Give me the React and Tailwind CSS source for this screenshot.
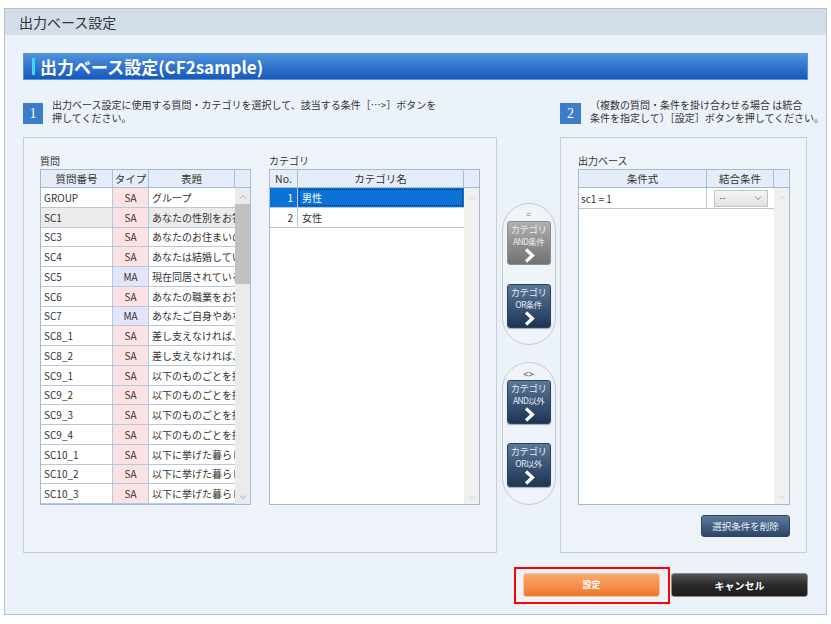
import React from 'react';

const questions = [
  ['GROUP', 'SA', 'グループ'],
  ['SC1', 'SA', 'あなたの性別をお答えください。'],
  ['SC3', 'SA', 'あなたのお住まいの地域をお答えください。'],
  ['SC4', 'SA', 'あなたは結婚していますか。'],
  ['SC5', 'MA', '現在同居されている方をお答えください。'],
  ['SC6', 'SA', 'あなたの職業をお答えください。'],
  ['SC7', 'MA', 'あなたご自身やあなたのご家族の職業'],
  ['SC8_1', 'SA', '差し支えなければ、あなたの'],
  ['SC8_2', 'SA', '差し支えなければ、世帯の'],
  ['SC9_1', 'SA', '以下のものごとを持っていますか。'],
  ['SC9_2', 'SA', '以下のものごとを持っていますか。'],
  ['SC9_3', 'SA', '以下のものごとを持っていますか。'],
  ['SC9_4', 'SA', '以下のものごとを持っていますか。'],
  ['SC10_1', 'SA', '以下に挙げた暮らしの'],
  ['SC10_2', 'SA', '以下に挙げた暮らしの'],
  ['SC10_3', 'SA', '以下に挙げた暮らしの'],
  ['SC10_4', 'SA', '以下に挙げた暮らしの'],
];

// small chevrons for the scroll tracks
function Arrow({ up, color = '#a6a6a6' }) {
  return (
    <svg width="8" height="5" viewBox="0 0 8 5" className="block">
      <path d={up ? 'M1 4.5 L4 1.5 L7 4.5' : 'M1 0.5 L4 3.5 L7 0.5'} fill="none" stroke={color} strokeWidth="1" />
    </svg>
  );
}

function Chevron() {
  return (
    <svg width="12" height="15" viewBox="0 0 12 15" className="block">
      <path d="M3 1.5 L9.5 7.5 L3 13.5" fill="none" stroke="#ffffff" strokeWidth="3.2" strokeLinejoin="miter" />
    </svg>
  );
}

function CondButton({ label, disabled }) {
  return (
    <div
      className={
        disabled
          ? 'flex h-[44px] w-[44px] flex-col items-center rounded-[3px] border border-[#8d8d8d] bg-gradient-to-b from-[#b0b0b0] to-[#727272] pt-[1px] text-[#ececec]'
          : 'flex h-[44px] w-[44px] flex-col items-center rounded-[3px] border border-[#2c4462] bg-gradient-to-b from-[#5b7696] to-[#1c3656] pt-[1px] text-[#e3eaf3] shadow-[0_1px_1px_rgba(0,0,0,0.3)]'
      }
    >
      <span className="whitespace-nowrap text-[9.5px] leading-[12px] tracking-[-0.5px]">カテゴリ</span>
      <span className="whitespace-nowrap text-[8.5px] leading-[12px] tracking-[-0.6px]">{label}</span>
      <div className="mt-[1px]">
        <Chevron />
      </div>
    </div>
  );
}

function HeaderCell({ w, children, last }) {
  return (
    <div className={`${w} flex h-full items-center justify-center ${last ? '' : 'border-r border-[#a9bfd7]'}`}>
      {children}
    </div>
  );
}

export default function App() {
  return (
    <div className="min-h-[624px] bg-white pl-[4px] pt-[8px] font-['Noto_Sans_CJK_JP','Noto_Sans',sans-serif] text-[#333333]">
      <div className="flex h-[607px] w-[823px] flex-col border border-[#b7bfca] bg-[#ecf2fa]">
        {/* window title */}
        <div className="flex h-[26px] items-center bg-[#d4ddea] pl-[14px] text-[14px]">出力ベース設定</div>

        <div className="flex flex-col px-[18px] pt-[18px]">
          {/* blue heading */}
          <div className="flex h-[27px] items-center border border-[#5e95d6] bg-gradient-to-b from-[#4d93dc] to-[#1558bd] pl-[8px]">
            <div className="h-[17px] w-[3px] bg-[#3fd4f4]"></div>
            <div className="ml-[5px] text-[17px] font-bold text-white">出力ベース設定(CF2sample)</div>
          </div>

          {/* steps */}
          <div className="mt-[18px] flex">
            <div className="flex w-[537px] shrink-0">
              <div className="mt-[5px] flex h-[21px] w-[20px] shrink-0 items-center justify-center bg-[#3b7dc6] font-['Liberation_Serif',serif] text-[14px] text-white">1</div>
              <div className="ml-[9px] whitespace-nowrap text-[10px] leading-[13px]">
                出力ベース設定に使用する質問・カテゴリを選択して、該当する条件［…&gt;］ボタンを
                <br />
                押してください。
              </div>
            </div>
            <div className="flex shrink-0">
              <div className="mt-[5px] flex h-[21px] w-[21px] shrink-0 items-center justify-center bg-[#3b7dc6] font-['Liberation_Serif',serif] text-[14px] text-white">2</div>
              <div className="ml-[9px] whitespace-nowrap text-[10px] leading-[13px]">
                （複数の質問・条件を掛け合わせる場合 は統合
                <br />
                条件を指定して）［設定］ボタンを押してください。
              </div>
            </div>
          </div>

          {/* panels */}
          <div className="mt-[13px] flex h-[416px]">
            {/* left panel */}
            <div className="flex w-[474px] gap-[18px] border border-[#c7cdd6] bg-[#eef3fa] pl-[16px] pt-[16px]">
              <div className="flex flex-col">
                <div className="mb-[2px] text-[10px] leading-[13px]">質問</div>
                <div className="w-[211px] border border-[#a3bad5] bg-white">
                  <div className="flex h-[18px] border-b border-[#a3bad5] bg-[#e4edf8] text-[10.5px]">
                    <HeaderCell w="w-[72px]">質問番号</HeaderCell>
                    <HeaderCell w="w-[36px]">タイプ</HeaderCell>
                    <HeaderCell w="w-[86px]">表題</HeaderCell>
                    <HeaderCell w="flex-1" last></HeaderCell>
                  </div>
                  <div className="flex h-[316px]">
                    <div className="w-[194px] overflow-hidden">
                      {questions.map((q, i) => (
                        <div
                          key={i}
                          className={`flex h-[19.75px] border-b border-[#b5c8de] text-[10px] ${i === 1 ? 'bg-[#ebebeb]' : 'bg-white'}`}
                        >
                          <div className="flex w-[72px] items-center border-r border-[#b5c8de] pl-[3px]">{q[0]}</div>
                          <div
                            className={`flex w-[36px] items-center justify-center border-r border-[#b5c8de] ${q[1] === 'MA' ? 'bg-[#e4e5fb]' : 'bg-[#fde2e3]'}`}
                          >
                            {q[1]}
                          </div>
                          <div className="flex w-[86px] items-center overflow-hidden whitespace-nowrap pl-[3px]">{q[2]}</div>
                        </div>
                      ))}
                    </div>
                    <div className="flex flex-1 flex-col items-center bg-[#ebebeb]">
                      <div className="flex h-[16px] items-center justify-center">
                        <Arrow up />
                      </div>
                      <div className="h-[80px] w-full bg-[#c1c1c1]"></div>
                      <div className="flex-1"></div>
                      <div className="flex h-[14px] items-center justify-center">
                        <Arrow />
                      </div>
                    </div>
                  </div>
                </div>
              </div>

              <div className="flex flex-col">
                <div className="mb-[2px] text-[10px] leading-[13px]">カテゴリ</div>
                <div className="w-[211px] border border-[#a3bad5] bg-white">
                  <div className="flex h-[18px] border-b border-[#a3bad5] bg-[#e4edf8] text-[10.5px]">
                    <HeaderCell w="w-[28px]">No.</HeaderCell>
                    <HeaderCell w="w-[166px]">カテゴリ名</HeaderCell>
                    <HeaderCell w="flex-1" last></HeaderCell>
                  </div>
                  <div className="flex h-[316px]">
                    <div className="w-[194px] overflow-hidden">
                      <div className="flex h-[20px] border-b border-[#b5c8de] bg-[#0b72d7] text-[10px] text-white">
                        <div className="flex w-[28px] items-center justify-end border-r border-[#b5c8de] pr-[4px]">1</div>
                        <div className="m-[1px] flex flex-1 items-center border border-dotted border-[#0c2a50] pl-[2px]">男性</div>
                      </div>
                      <div className="flex h-[20px] border-b border-[#b5c8de] text-[10px]">
                        <div className="flex w-[28px] items-center justify-end border-r border-[#b5c8de] pr-[4px]">2</div>
                        <div className="flex flex-1 items-center pl-[4px]">女性</div>
                      </div>
                    </div>
                    <div className="flex flex-1 flex-col items-center bg-[#f0f0f0]">
                      <div className="flex h-[18px] items-center justify-center">
                        <Arrow up color="#cfcfcf" />
                      </div>
                      <div className="flex-1"></div>
                      <div className="flex h-[14px] items-center justify-center">
                        <Arrow color="#cfcfcf" />
                      </div>
                    </div>
                  </div>
                </div>
              </div>
            </div>

            {/* middle condition buttons */}
            <div className="flex w-[63px] flex-col items-center pt-[66px]">
              <div className="flex h-[142px] w-[54px] flex-col items-center rounded-full border border-[#c9c9c9] bg-[#eff3fa] pt-[6px]">
                <div className="text-[9px] leading-[10px] text-[#777777]">=</div>
                <div className="mt-[1px]">
                  <CondButton label="AND条件" disabled />
                </div>
                <div className="mt-[19px]">
                  <CondButton label="OR条件" />
                </div>
              </div>
              <div className="mt-[17px] flex h-[143px] w-[54px] flex-col items-center rounded-full border border-[#c9c9c9] bg-[#eff3fa] pt-[5px]">
                <div className="text-[10px] leading-[11px] text-[#555555]">&lt;&gt;</div>
                <div className="mt-[1px]">
                  <CondButton label="AND以外" />
                </div>
                <div className="mt-[19px]">
                  <CondButton label="OR以外" />
                </div>
              </div>
            </div>

            {/* right panel */}
            <div className="flex w-[247px] flex-col border border-[#c7cdd6] bg-[#eef3fa] pl-[17px] pt-[16px]">
              <div className="mb-[2px] text-[10px] leading-[13px]">出力ベース</div>
              <div className="w-[212px] border border-[#a3bad5] bg-white">
                <div className="flex h-[18px] border-b border-[#a3bad5] bg-[#e4edf8] text-[10.5px]">
                  <HeaderCell w="w-[128px]">条件式</HeaderCell>
                  <HeaderCell w="w-[67px]">結合条件</HeaderCell>
                  <HeaderCell w="flex-1" last></HeaderCell>
                </div>
                <div className="flex h-[316px]">
                  <div className="w-[195px]">
                    <div className="flex h-[21px] border-b border-[#b5c8de] text-[10px]">
                      <div className="flex w-[128px] items-center border-r border-[#b5c8de] pl-[2px]">sc1 = 1</div>
                      <div className="flex flex-1 items-center justify-center">
                        <div className="flex h-[17px] w-[54px] items-center justify-between border border-[#c4c4c4] bg-gradient-to-b from-[#f6f6f6] to-[#e1e1e1] px-[5px] text-[9px] text-[#555555]">
                          <span>--</span>
                          <Arrow color="#888888" />
                        </div>
                      </div>
                    </div>
                  </div>
                  <div className="flex flex-1 flex-col items-center bg-[#f0f0f0]">
                    <div className="flex h-[18px] items-center justify-center">
                      <Arrow up color="#cfcfcf" />
                    </div>
                    <div className="flex-1"></div>
                    <div className="flex h-[14px] items-center justify-center">
                      <Arrow color="#cfcfcf" />
                    </div>
                  </div>
                </div>
              </div>
              <div className="mt-[10px] flex w-[212px] justify-end">
                <div className="flex h-[22px] w-[89px] items-center justify-center rounded-[3px] border border-[#2d4766] bg-gradient-to-b from-[#5f7b9c] to-[#2a4769] text-[9.5px] text-[#e8eef5]">
                  選択条件を削除
                </div>
              </div>
            </div>
          </div>

          {/* footer buttons */}
          <div className="mt-[14px] flex justify-end">
            <div className="flex h-[37px] w-[156px] border-2 border-[#ff0000] pl-[7px] pt-[4px]">
              <div className="flex h-[24px] w-[137px] items-center justify-center rounded-[3px] border border-[#f6c39b] bg-gradient-to-b from-[#faa96c] to-[#ef762b] text-[9px] font-bold text-white">
                設定
              </div>
            </div>
            <div className="ml-[1px] mt-[6px] flex h-[24px] w-[137px] items-center justify-center rounded-[3px] border border-[#8c8c8c] bg-gradient-to-b from-[#555555] via-[#2b2b2b] to-[#1b1b1b] text-[10px] font-bold text-white">
              キャンセル
            </div>
          </div>
        </div>
      </div>
    </div>
  );
}
